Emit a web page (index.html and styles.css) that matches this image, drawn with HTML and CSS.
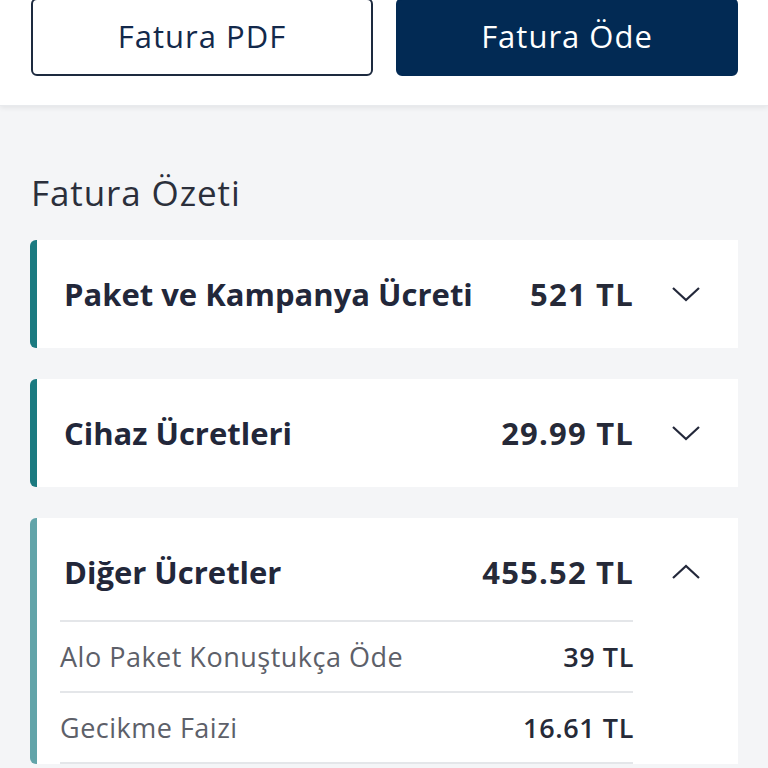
FILE: index.html
```html
<!DOCTYPE html>
<html lang="tr">
<head>
    <meta charset="UTF-8">
    <title>Fatura</title>
    <link rel="stylesheet" href="styles.css">
</head>
<body>

    <div class="top">
        <button class="btn btn-outline" type="button">Fatura PDF</button>
        <button class="btn btn-solid" type="button">Fatura Öde</button>
    </div>

    <div class="summary">
        <div class="summary-title">Fatura Özeti</div>

        <div class="card">
            <div class="card-head">
                <div class="card-name">Paket ve Kampanya Ücreti</div>
                <div class="card-amount">521 TL</div>
                <svg class="chevron" viewBox="0 0 30 16"><path d="M2 2 L15 14 L28 2"/></svg>
            </div>
        </div>

        <div class="card">
            <div class="card-head">
                <div class="card-name">Cihaz Ücretleri</div>
                <div class="card-amount">29.99 TL</div>
                <svg class="chevron" viewBox="0 0 30 16"><path d="M2 2 L15 14 L28 2"/></svg>
            </div>
        </div>

        <div class="card card-open">
            <div class="card-head">
                <div class="card-name">Diğer Ücretler</div>
                <div class="card-amount">455.52 TL</div>
                <svg class="chevron" viewBox="0 0 30 16"><path d="M2 14 L15 2 L28 14"/></svg>
            </div>
            <div class="card-rows">
                <div class="row">
                    <div class="row-name">Alo Paket Konuştukça Öde</div>
                    <div class="row-amount">39 TL</div>
                </div>
                <div class="row">
                    <div class="row-name">Gecikme Faizi</div>
                    <div class="row-amount">16.61 TL</div>
                </div>
            </div>
        </div>
    </div>

</body>
</html>
```

FILE: styles.css
```css
* {
    margin: 0;
    padding: 0;
    box-sizing: border-box;
}
body {
    font-family: "Open Sans", Lato, sans-serif;
    background: #f4f5f7;
    color: #23283a;
    height: 768px;
    overflow: hidden;
}

/***************************************************/

.top {
    background: #ffffff;
    display: flex;
    gap: 23px;
    padding: 0 30px 29px 31px;
    margin-top: -2px;
    box-shadow: 0 2px 5px rgba(0, 0, 0, 0.07);
    border-bottom: 1px solid #e8eaed;
}
.btn {
    flex: 1;
    height: 78px;
    border-radius: 6px;
    font-family: "Open Sans", sans-serif;
    font-size: 31px;
    letter-spacing: 1px;
    padding-bottom: 3px;
}
.btn-outline {
    background: #ffffff;
    border: 2px solid #1d2a3f;
    color: #13294b;
}
.btn-solid {
    background: #022a54;
    border: 2px solid #022a54;
    color: #ffffff;
}

/***************************************************/

.summary {
    padding: 67px 30px 0 30px;
}
.summary-title {
    font-size: 35px;
    color: #2b2f3b;
    line-height: 40px;
    letter-spacing: 0.9px;
    margin-bottom: 27px;
    padding-left: 1px;
}
.card {
    background: #ffffff;
    border-left: 7px solid #1b7a80;
    border-radius: 6px 0 0 6px;
    margin-bottom: 31px;
}
.card-open {
    border-left-color: #62a4a9;
}
.card-head {
    display: flex;
    align-items: center;
    height: 108px;
    padding: 0 37px 0 27px;
}
.card-name {
    flex: 1;
    font-size: 31px;
    font-weight: 700;
    color: #22273a;
}
.card-amount {
    font-size: 31px;
    font-weight: 700;
    letter-spacing: 1.2px;
    margin-right: -1px;
    color: #262a38;
}
.chevron {
    width: 30px;
    height: 16px;
    margin-left: 38px;
    fill: none;
    stroke: #23283a;
    stroke-width: 2.2;
}

/*********************/

.card-rows {
    margin: -6px 105px 0 23px;
    border-bottom: 2px solid #e4e6e9;
}
.row {
    display: flex;
    align-items: center;
    justify-content: space-between;
    height: 71px;
    border-top: 2px solid #e4e6e9;
}
.row-name {
    font-size: 27px;
    letter-spacing: 0.5px;
    color: #5d6069;
}
.row-amount {
    font-size: 27px;
    font-weight: 600;
    letter-spacing: 0.6px;
    margin-right: -1px;
    color: #262a38;
}
```
